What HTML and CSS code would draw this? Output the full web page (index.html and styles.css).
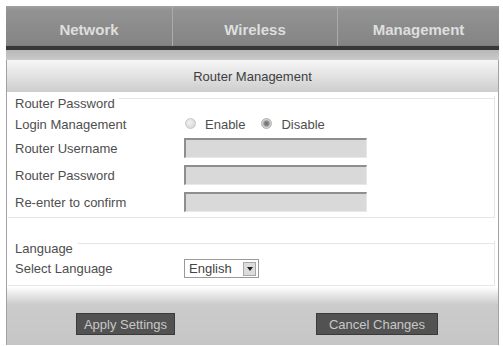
FILE: index.html
```html
<!DOCTYPE html>
<html>
<head>
<meta charset="utf-8">
<link rel="stylesheet" href="styles.css">
</head>
<body>
<div class="page">
  <nav class="nav">
    <div class="tab">Network</div>
    <div class="tab">Wireless</div>
    <div class="tab">Management</div>
  </nav>
  <div class="subbar"></div>
  <div class="panel">
    <div class="header">Router Management</div>
    <div class="content">
      <div class="group g1">
        <div class="legend">Router Password</div>
        <div class="row r-login">
          <div class="label">Login Management</div>
          <div class="radios">
            <span class="radio"></span><span class="rtext">Enable</span>
            <span class="radio checked"></span><span class="rtext">Disable</span>
          </div>
        </div>
        <div class="row r-first">
          <div class="label">Router Username</div>
          <div class="input"></div>
        </div>
        <div class="row r-next">
          <div class="label">Router Password</div>
          <div class="input"></div>
        </div>
        <div class="row r-next">
          <div class="label">Re-enter to confirm</div>
          <div class="input"></div>
        </div>
      </div>
      <div class="group g2">
        <div class="legend">Language</div>
        <div class="row r-lang">
          <div class="label">Select Language</div>
          <div class="select"><span class="sel-text">English</span><span class="sel-btn"><span class="tri"></span></span></div>
        </div>
      </div>
    </div>
    <div class="footer">
      <div class="btn btn-apply">Apply Settings</div>
      <div class="btn btn-cancel">Cancel Changes</div>
    </div>
  </div>
</div>
</body>
</html>
```

FILE: styles.css
```css
html, body {
  margin: 0;
  padding: 0;
  background: #ffffff;
}
body {
  font-family: "Liberation Sans", Arial, sans-serif;
  font-size: 13px;
  color: #4e4e4e;
}
.page {
  margin-left: 6px;
  width: 493px;
  padding-top: 6px;
}
.nav {
  display: grid;
  grid-template-columns: 166px 165px 162px;
  height: 40px;
  background: linear-gradient(#a2a2a2 0px, #939393 4px, #8c8c8c 20px, #858585 38px, #7c7c7c 40px);
  border-bottom: 4px solid #383838;
}
.tab {
  display: flex;
  align-items: center;
  justify-content: center;
  padding-top: 6px;
  box-sizing: border-box;
  font-size: 15px;
  font-weight: bold;
  color: #dedede;
}
.tab + .tab {
  border-left: 1px solid #ababab;
}
.subbar {
  height: 10px;
  background: linear-gradient(#b8b8b8, #cacaca);
}
.panel {
  border-left: 1px solid #a2a2a2;
  border-right: 1px solid #a2a2a2;
}
.header {
  height: 32px;
  display: flex;
  align-items: center;
  justify-content: center;
  padding-top: 1px;
  box-sizing: border-box;
  background: linear-gradient(#f6f6f6, #e2e2e2 50%, #cdcdcd);
  color: #3e3e3e;
}
.content {
  padding: 4px 3px 0 1px;
}
.group {
  border: 1px solid #e6e6e6;
  border-top: none;
  border-left: none;
  padding: 0 6px 0 7px;
}
.g1 {
  padding-bottom: 5px;
}
.g2 {
  margin-top: 23px;
  padding-bottom: 7px;
}
.legend {
  display: flex;
  height: 15px;
  line-height: 15px;
  margin: 0 -6px 0 0;
}
.legend::after {
  content: "";
  flex: 1;
  height: 0;
  margin-top: 2px;
  margin-left: 4px;
  border-top: 1px solid #e6e6e6;
}
.row {
  display: flex;
  align-items: center;
  height: 20px;
}
.r-login { margin-top: 3px; }
.r-first { margin-top: 4px; }
.r-next { margin-top: 7px; }
.r-lang { margin-top: 3px; height: 19px; }
.label {
  width: 169px;
  flex: none;
}
.radios {
  display: flex;
  align-items: center;
  padding-left: 1px;
}
.radio {
  width: 9px;
  height: 9px;
  border-radius: 50%;
  border: 1px solid #c8c8c8;
  background: radial-gradient(circle at 40% 40%, #f2f2f2, #cfcfcf);
  margin-top: -2px;
}
.radio.checked {
  border-color: #b0b0b0;
  background: radial-gradient(circle at 50% 50%, #6e6e6e 0, #888 35%, #cfcfcf 60%, #e8e8e8 100%);
}
.rtext {
  margin-left: 9px;
  margin-right: 16px;
}
.input {
  width: 183px;
  height: 20px;
  box-sizing: border-box;
  background: #d9d9d9;
  border-top: 2px solid #8e8e8e;
  border-left: 2px solid #8e8e8e;
  border-right: 1px solid #e8e8e8;
  border-bottom: 1px solid #e8e8e8;
}
.select {
  width: 75px;
  height: 19px;
  box-sizing: border-box;
  border: 1px solid #9a9a9a;
  background: #fff;
  display: flex;
  align-items: center;
  justify-content: space-between;
  padding: 0 2px 0 4px;
  color: #444;
}
.sel-btn {
  width: 13px;
  height: 14px;
  box-sizing: border-box;
  background: #dcdcdc;
  border: 1px solid #a8a8a8;
  display: flex;
  align-items: center;
  justify-content: center;
}
.tri {
  width: 0;
  height: 0;
  border-left: 3px solid transparent;
  border-right: 3px solid transparent;
  border-top: 4px solid #222;
}
.footer {
  height: 58px;
  margin-top: 1px;
  background: linear-gradient(#ffffff 0px, #e6e6e6 8px, #cbcbcb 18px, #c6c6c6 58px);
  display: flex;
  align-items: flex-start;
  padding-top: 26px;
  box-sizing: border-box;
}
.btn {
  height: 22px;
  box-sizing: border-box;
  background: #525252;
  border: 1px solid #3a3a3a;
  color: #c8c8c8;
  display: flex;
  align-items: center;
  justify-content: center;
}
.btn-apply {
  width: 99px;
  margin-left: 69px;
}
.btn-cancel {
  width: 122px;
  margin-left: 141px;
}
```
